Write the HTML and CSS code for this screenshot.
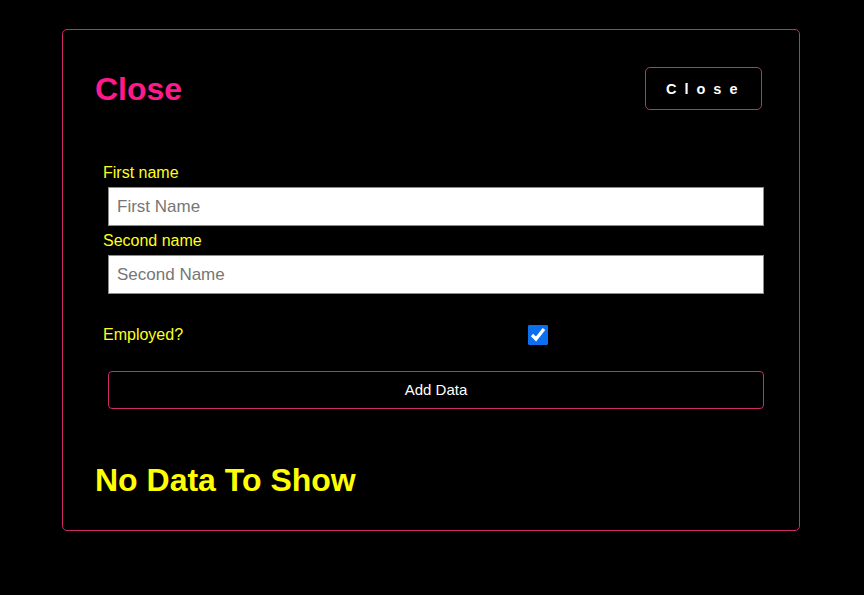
FILE: index.html
```html
<!DOCTYPE html>
<html lang="en">
<head>
<meta charset="utf-8">
<title>Employees</title>
<link rel="stylesheet" href="styles.css">
</head>
<body>
<div class="card">
  <div class="header">
    <h1 class="title">Close</h1>
    <button class="close-btn" type="button">Close</button>
  </div>
  <form class="form">
    <label class="label" for="first">First name</label>
    <input class="input" id="first" type="text" placeholder="First Name">
    <label class="label" for="second">Second name</label>
    <input class="input" id="second" type="text" placeholder="Second Name">
    <div class="check-row">
      <label class="label check-label" for="employed">Employed?</label>
      <input class="checkbox" id="employed" type="checkbox" checked>
    </div>
    <button class="add-btn" type="button">Add Data</button>
  </form>
  <h2 class="empty">No Data To Show</h2>
</div>
</body>
</html>
```

FILE: styles.css
```css
html, body {
  margin: 0;
  padding: 0;
  background: #000;
}

body {
  font-family: "Liberation Sans", Arial, sans-serif;
  color: #fff;
}

.card {
  box-sizing: border-box;
  width: 738px;
  margin: 29px 0 0 62px;
  padding: 37px 37px 31px 32px;
  border: 1px solid #cc2a6a;
  border-radius: 5px;
}

.header {
  display: flex;
  justify-content: space-between;
  align-items: center;
  height: 43px;
}

.title {
  margin: 1px 0 0 0;
  font-size: 32px;
  font-weight: bold;
  color: #ff1a8c;
  line-height: 37px;
}

.close-btn {
  box-sizing: border-box;
  height: 43px;
  width: 117px;
  padding: 0 12px 0 20px;
  background: #000;
  border: 1px solid #cc2a6a;
  border-radius: 5px;
  color: #fff;
  font-family: "Liberation Sans", Arial, sans-serif;
  font-size: 14.5px;
  font-weight: bold;
  letter-spacing: 8px;
  text-align: left;
}

.form {
  display: flex;
  flex-direction: column;
  margin: 54px -2px 0 8px;
}

.label {
  display: block;
  font-size: 16px;
  line-height: 18px;
  color: #ffff1a;
  margin: 0 0 5px 0;
}

.input {
  box-sizing: border-box;
  margin: 0 0 6px 5px;
  height: 39px;
  padding: 0 8px;
  border: 1px solid #8d8d8d;
  border-radius: 0;
  background: #fff;
  font-family: "Liberation Sans", Arial, sans-serif;
  font-size: 17px;
  color: #222;
  outline: none;
}

.input::placeholder {
  color: #767676;
}

.check-row {
  display: flex;
  align-items: center;
  height: 20px;
  margin-top: 25px;
}

.check-label {
  margin: 0;
  width: 425px;
}

.checkbox {
  width: 20px;
  height: 20px;
  margin: 0;
  accent-color: #0b6ff0;
}

.add-btn {
  box-sizing: border-box;
  margin: 26px 0 0 5px;
  height: 38px;
  padding: 0 0 2px 0;
  background: #000;
  border: 1px solid #cc2a6a;
  border-radius: 4px;
  color: #fff;
  font-family: "Liberation Sans", Arial, sans-serif;
  font-size: 15px;
}

.empty {
  margin: 53px 0 0 0;
  font-size: 32px;
  line-height: 37px;
  font-weight: bold;
  color: #ffff00;
}
```
